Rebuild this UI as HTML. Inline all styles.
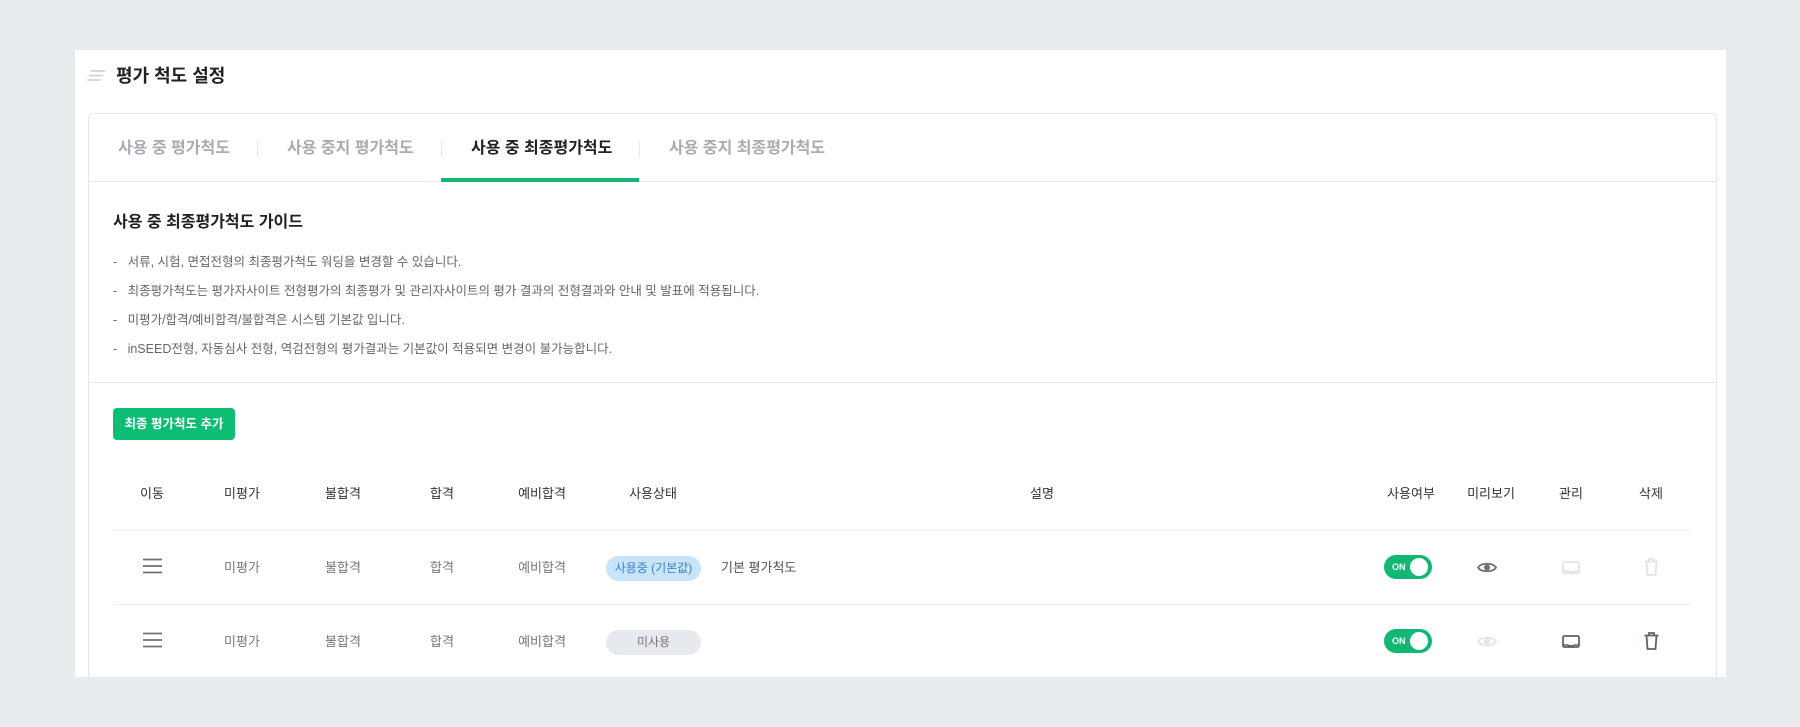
<!DOCTYPE html>
<html><head><meta charset="utf-8"><style>
*{margin:0;padding:0;box-sizing:border-box}
body{width:1800px;height:727px;background:#e8ebee;font-family:"Liberation Sans","Noto Sans CJK KR",sans-serif;position:relative;overflow:hidden}
.a{position:absolute;white-space:nowrap}
.card{position:absolute;left:75px;top:50px;width:1651px;height:627px;background:#fff}
.box{position:absolute;left:88px;top:113px;width:1629px;height:564px;border:1px solid #e3e6ea;border-bottom:none;border-radius:6px 6px 0 0}
.tab{position:absolute;top:139px;font-size:16px;color:#a9adb3;line-height:20px;font-weight:bold}
.sep{position:absolute;top:141px;width:1px;height:16px;background:#e6e8eb}
.b{position:absolute;left:113px;font-size:12.5px;color:#666;line-height:16px}
.h{position:absolute;top:486px;font-size:13px;color:#333;transform:translateX(-50%);line-height:16px}
.c{position:absolute;font-size:13px;color:#777;transform:translateX(-50%);line-height:16px}
.line{position:absolute;left:113px;width:1578px;height:1px;background:#eceef0}
.tg{position:absolute;left:1384px;width:48px;height:24px;border-radius:12px;background:#11b873}
.tg span{position:absolute;left:8px;top:6px;font-size:9px;font-weight:bold;color:#fff;line-height:12px}
.tg i{position:absolute;right:4px;top:3px;width:18px;height:18px;border-radius:50%;background:#fff}
.pill{position:absolute;left:606px;width:95px;height:25px;border-radius:13px;font-size:12px;text-align:center;line-height:25px}
</style></head><body>
<div class="card"></div>
<svg class="a" style="left:86px;top:70px" width="20" height="12"><path d="M5 1h14M3 5.5h14M1 10h14" stroke="#c9ccd1" stroke-width="1.6"/></svg>
<div class="a" style="left:116px;top:64px;font-size:18px;font-weight:bold;color:#222;line-height:24px">평가 척도 설정</div>
<div class="box"></div>
<div style="position:absolute;left:89px;top:181px;width:1627px;height:1px;background:#e3e6ea"></div>
<div class="tab" style="left:118px">사용 중 평가척도</div>
<div class="sep" style="left:257px"></div>
<div class="tab" style="left:287px">사용 중지 평가척도</div>
<div class="sep" style="left:441px"></div>
<div class="tab" style="left:471px;color:#222">사용 중 최종평가척도</div>
<div class="sep" style="left:639px"></div>
<div class="tab" style="left:669px">사용 중지 최종평가척도</div>
<div style="position:absolute;left:441px;top:178px;width:198px;height:4px;background:#11b873"></div>
<div class="a" style="left:113px;top:213px;font-size:16px;font-weight:bold;color:#222;line-height:20px">사용 중 최종평가척도 가이드</div>
<div class="b" style="top:254px">-&nbsp;&nbsp;&nbsp;서류, 시험, 면접전형의 최종평가척도 워딩을 변경할 수 있습니다.</div>
<div class="b" style="top:283px">-&nbsp;&nbsp;&nbsp;최종평가척도는 평가자사이트 전형평가의 최종평가 및 관리자사이트의 평가 결과의 전형결과와 안내 및 발표에 적용됩니다.</div>
<div class="b" style="top:312px">-&nbsp;&nbsp;&nbsp;미평가/합격/예비합격/불합격은 시스템 기본값 입니다.</div>
<div class="b" style="top:341px">-&nbsp;&nbsp;&nbsp;inSEED전형, 자동심사 전형, 역검전형의 평가결과는 기본값이 적용되면 변경이 불가능합니다.</div>
<div style="position:absolute;left:89px;top:382px;width:1627px;height:1px;background:#e3e6ea"></div>
<div class="a" style="left:113px;top:408px;width:122px;height:32px;border-radius:4px;background:#0dbd73;color:#fff;font-size:12.5px;font-weight:bold;text-align:center;line-height:32px">최종 평가척도 추가</div>
<div class="h" style="left:152px">이동</div><div class="h" style="left:242px">미평가</div><div class="h" style="left:343px">불합격</div><div class="h" style="left:442px">합격</div><div class="h" style="left:542px">예비합격</div><div class="h" style="left:653px">사용상태</div><div class="h" style="left:1042px">설명</div><div class="h" style="left:1411px">사용여부</div><div class="h" style="left:1491px">미리보기</div><div class="h" style="left:1571px">관리</div><div class="h" style="left:1651px">삭제</div>
<div class="line" style="top:530px"></div>
<div class="line" style="top:604px"></div>
<svg class="a" style="left:143px;top:558px" width="19" height="16"><path d="M0 1.5h19M0 8h19M0 14.5h19" stroke="#6b7079" stroke-width="1.8"/></svg>
<svg class="a" style="left:143px;top:632px" width="19" height="16"><path d="M0 1.5h19M0 8h19M0 14.5h19" stroke="#6b7079" stroke-width="1.8"/></svg>
<div class="c" style="left:242px;top:560px">미평가</div><div class="c" style="left:343px;top:560px">불합격</div><div class="c" style="left:442px;top:560px">합격</div><div class="c" style="left:542px;top:560px">예비합격</div>
<div class="c" style="left:242px;top:634px">미평가</div><div class="c" style="left:343px;top:634px">불합격</div><div class="c" style="left:442px;top:634px">합격</div><div class="c" style="left:542px;top:634px">예비합격</div>
<div class="pill" style="top:556px;background:#c8e4fb;color:#3f7fc0">사용중 (기본값)</div>
<div class="a" style="left:721px;top:560px;font-size:13px;color:#555;line-height:16px">기본 평가척도</div>
<div class="pill" style="top:630px;background:#e6e9ee;color:#777">미사용</div>
<div class="tg" style="top:555px"><span>ON</span><i></i></div>
<div class="tg" style="top:629px"><span>ON</span><i></i></div>
<svg class="a" style="left:1477px;top:561px" width="20" height="13"><path d="M1 6.5C4 1.5 16 1.5 19 6.5C16 11.5 4 11.5 1 6.5Z" fill="none" stroke="#6b7079" stroke-width="1.8"/><circle cx="10" cy="6.5" r="3" fill="#6b7079"/></svg>
<svg class="a" style="left:1477px;top:635px" width="20" height="13"><path d="M1 6.5C4 1.5 16 1.5 19 6.5C16 11.5 4 11.5 1 6.5Z" fill="none" stroke="#e3e4e6" stroke-width="1.8"/><circle cx="10" cy="6.5" r="3" fill="#e3e4e6"/></svg>
<svg class="a" style="left:1562px;top:561px" width="18" height="14"><rect x="1" y="1" width="16" height="11" rx="1.5" fill="none" stroke="#e3e4e6" stroke-width="1.8"/><path d="M1 10h5l1.5 2h3l1.5-2h5" fill="#e3e4e6" stroke="#e3e4e6" stroke-width="1.5"/></svg>
<svg class="a" style="left:1562px;top:635px" width="18" height="14"><rect x="1" y="1" width="16" height="11" rx="1.5" fill="none" stroke="#5d626b" stroke-width="1.8"/><path d="M1 10h5l1.5 2h3l1.5-2h5" fill="#5d626b" stroke="#5d626b" stroke-width="1.5"/></svg>
<svg class="a" style="left:1644px;top:558px" width="15" height="18"><path d="M0.5 3.5h14M5 3.5V1h5v2.5M2.5 3.5l1 13.5h8l1-13.5" fill="none" stroke="#e3e4e6" stroke-width="1.8"/></svg>
<svg class="a" style="left:1644px;top:632px" width="15" height="18"><path d="M0.5 3.5h14M5 3.5V1h5v2.5M2.5 3.5l1 13.5h8l1-13.5" fill="none" stroke="#5d626b" stroke-width="1.8"/></svg>
</body></html>
